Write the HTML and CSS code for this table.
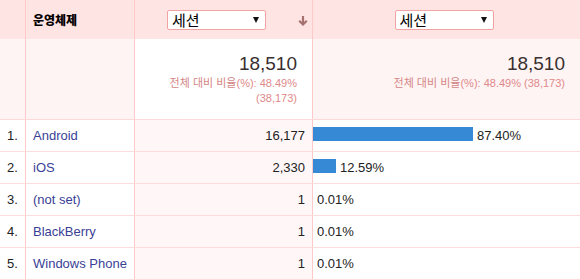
FILE: index.html
```html
<!DOCTYPE html>
<html lang="ko">
<head>
<meta charset="utf-8">
<link rel="stylesheet" href="styles.css">
</head>
<body>
<div class="report">
  <div class="row head">
    <div class="cell"></div>
    <div class="cell dim-title">운영체제</div>
    <div class="cell metric-head sorted">
      <div class="picker"><span>세션</span><i class="tri"></i></div>
      <svg class="sort" width="10" height="11" viewBox="0 0 10 11"><path d="M5 1V9.5M1.2 5.8L5 9.5L8.8 5.8" fill="none" stroke="#a4716f" stroke-width="2.2"/></svg>
    </div>
    <div class="cell metric-head">
      <div class="picker"><span>세션</span><i class="tri"></i></div>
    </div>
  </div>
  <div class="row total">
    <div class="cell tint"></div>
    <div class="cell tint"></div>
    <div class="cell sum">
      <div class="big">18,510</div>
      <div class="sub"><span class="ko">전체 대비 비율</span>(%): 48.49% (38,173)</div>
    </div>
    <div class="cell sum tint">
      <div class="big">18,510</div>
      <div class="sub"><span class="ko">전체 대비 비율</span>(%): 48.49% (38,173)</div>
    </div>
  </div>
  <div class="row data">
    <div class="cell idx">1.</div>
    <div class="cell name">Android</div>
    <div class="cell val">16,177</div>
    <div class="cell pct"><span class="bar" style="width:160px"></span><span>87.40%</span></div>
  </div>
  <div class="row data">
    <div class="cell idx">2.</div>
    <div class="cell name">iOS</div>
    <div class="cell val">2,330</div>
    <div class="cell pct"><span class="bar" style="width:23px"></span><span>12.59%</span></div>
  </div>
  <div class="row data">
    <div class="cell idx">3.</div>
    <div class="cell name">(not set)</div>
    <div class="cell val">1</div>
    <div class="cell pct"><span class="bar" style="width:0px"></span><span>0.01%</span></div>
  </div>
  <div class="row data">
    <div class="cell idx">4.</div>
    <div class="cell name">BlackBerry</div>
    <div class="cell val">1</div>
    <div class="cell pct"><span class="bar" style="width:0px"></span><span>0.01%</span></div>
  </div>
  <div class="row data">
    <div class="cell idx">5.</div>
    <div class="cell name">Windows Phone</div>
    <div class="cell val">1</div>
    <div class="cell pct"><span class="bar" style="width:0px"></span><span>0.01%</span></div>
  </div>
</div>
</body>
</html>
```

FILE: styles.css
```css
* { box-sizing: border-box; }
html, body { margin: 0; padding: 0; background: #fff; }
body {
  font-family: "Liberation Sans", Arial, "Noto Sans CJK KR", sans-serif;
  font-size: 13px;
  color: #333;
}
.report { width: 580px; }
.row {
  display: grid;
  grid-template-columns: 26px 109px 178px 267px;
}
.cell { border-right: 1px solid #ffc9c9; }
.cell:last-child { border-right: 0; }

.head { height: 39px; background: #ffe4e4; }
.head .cell { display: flex; align-items: center; }
.dim-title {
  padding-left: 7px;
  font-family: "Noto Sans CJK KR", sans-serif;
  font-weight: 900;
  font-size: 12px;
  color: #000;
}
.metric-head { justify-content: center; padding-right: 5px; }
.metric-head.sorted { justify-content: flex-start; padding-right: 4px; }
.metric-head.sorted .picker { margin-left: auto; }
.metric-head.sorted .sort { margin-left: auto; margin-top: 1px; }
.picker {
  width: 99px;
  height: 20px;
  margin-top: 1px;
  background: #fff;
  border: 1px solid #f2a3a3;
  border-radius: 2px;
  display: flex;
  align-items: center;
  justify-content: space-between;
  padding: 0 6px 0 4px;
}
.picker span {
  font-family: "Noto Sans CJK KR", sans-serif;
  font-size: 15px;
  color: #000;
  line-height: 18px;
}
.tri {
  width: 0; height: 0;
  border-left: 3.5px solid transparent;
  border-right: 3.5px solid transparent;
  border-top: 6px solid #111;
}

.total { height: 81px; border-bottom: 1px solid #ffd9d9; }
.tint { background: #fff4f4; }
.sum { text-align: right; padding: 14px 15px 0 20px; }
.big { font-size: 19px; line-height: 22px; color: #3a2f2f; }
.sub { font-size: 11px; line-height: 15px; color: #e0898a; }
.sub .ko { font-family: "Noto Sans CJK KR", sans-serif; color: #d48686; }

.data { height: 32px; border-bottom: 1px solid #ffdcdc; }
.data .cell { display: flex; align-items: center; }
.idx { padding-left: 7px; color: #222; }
.name { padding-left: 7px; color: #3a3f96; }
.val { justify-content: flex-end; padding-right: 7px; background: #fff7f7; color: #222; }
.pct { color: #222; }
.bar {
  display: block;
  height: 14px;
  margin-top: -3px;
  margin-right: 4px;
  background: #3689d4;
}
```
